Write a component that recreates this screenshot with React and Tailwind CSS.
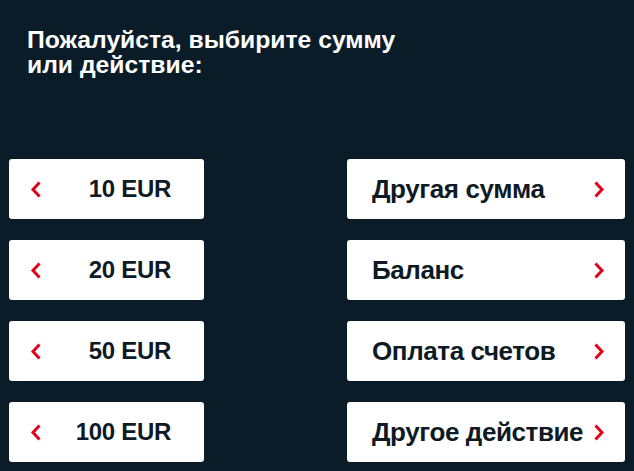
import React from "react";

const Chevron = ({ dir }) => (
  <svg width="12" height="17" viewBox="0 0 12 17" className="shrink-0">
    <path
      d={dir === "left" ? "M9.5 1.5 L3 8.5 L9.5 15.5" : "M2.5 1.5 L9 8.5 L2.5 15.5"}
      fill="none"
      stroke="#e2001a"
      strokeWidth="3"
    />
  </svg>
);

const left = ["10 EUR", "20 EUR", "50 EUR", "100 EUR"];
const right = ["Другая сумма", "Баланс", "Оплата счетов", "Другое действие"];

export default function App() {
  return (
    <div
      className="w-[634px] h-[471px] bg-[#0b1c29] overflow-hidden"
      style={{ fontFamily: '"Liberation Sans", Arial, sans-serif' }}
    >
      <h1 className="pt-[27px] pl-[27px] text-[24.7px] leading-[25px] font-bold text-white">
        <span className="block">Пожалуйста, выбирите сумму</span>
        <span className="block">или действие:</span>
      </h1>
      <div className="mt-[82px] flex justify-between pl-[9px] pr-[9px]">
        <div className="flex flex-col gap-[21px]">
          {left.map((t) => (
            <div
              key={t}
              className="w-[195px] h-[60px] bg-white rounded-[3px] flex items-center pl-[21px] pr-[33px]"
            >
              <Chevron dir="left" />
              <span className="ml-auto text-[24px] font-bold text-[#0e1a24] tracking-[-0.3px]">{t}</span>
            </div>
          ))}
        </div>
        <div className="flex flex-col gap-[21px]">
          {right.map((t) => (
            <div
              key={t}
              className="w-[278px] h-[60px] bg-white rounded-[3px] flex items-center pl-[25px] pr-[20px]"
            >
              <span className="text-[26px] font-bold text-[#0e1a24] tracking-[-0.4px] whitespace-nowrap">{t}</span>
              <span className="ml-auto">
                <Chevron dir="right" />
              </span>
            </div>
          ))}
        </div>
      </div>
    </div>
  );
}
